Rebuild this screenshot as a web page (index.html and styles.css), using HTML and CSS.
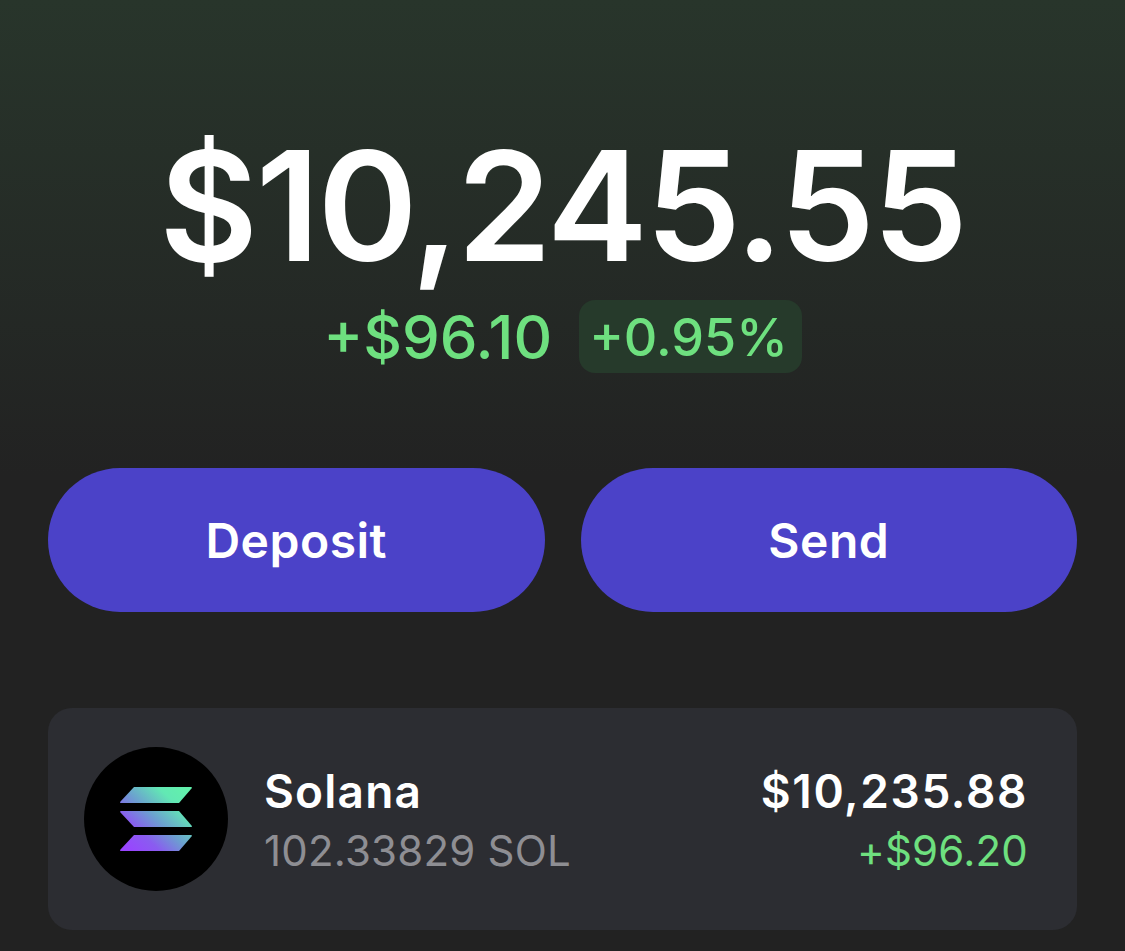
FILE: index.html
```html
<!DOCTYPE html>
<html lang="en">
<head>
    <meta charset="UTF-8">
    <title>Wallet</title>
    <link rel="stylesheet" href="styles.css">
</head>
<body>
    <div class="balance">$10,245.55</div>
    <div class="change">
        <span class="change-amount">+$96.10</span>
        <span class="change-pill">+0.95%</span>
    </div>
    <div class="actions">
        <button class="action-btn">Deposit</button>
        <button class="action-btn">Send</button>
    </div>
    <div class="token">
        <div class="token-logo">
            <svg width="72" height="65" viewBox="0 0 72 65">
                <defs>
                    <linearGradient id="sol" gradientUnits="userSpaceOnUse" x1="8" y1="62" x2="64" y2="2">
                        <stop offset="0" stop-color="#9945ff"/>
                        <stop offset="0.25" stop-color="#8a5cf0"/>
                        <stop offset="0.5" stop-color="#6c9fd0"/>
                        <stop offset="0.8" stop-color="#62e8b4"/>
                        <stop offset="1" stop-color="#62f0ac"/>
                    </linearGradient>
                </defs>
                <path d="M14 0H71Q72.5 0 71.5 1.5L59 16H1Q-.5 16 .5 14.5Z" fill="url(#sol)"/>
                <path d="M1 24H59L71.5 38.5Q72.5 40 71 40H14L.5 25.5Q-.5 24 1 24Z" fill="url(#sol)"/>
                <path d="M14 48H71Q72.5 48 71.5 49.5L59 64H1Q-.5 64 .5 62.5Z" fill="url(#sol)"/>
            </svg>
        </div>
        <div class="token-info">
            <div class="token-name">Solana</div>
            <div class="token-qty">102.33829 SOL</div>
        </div>
        <div class="token-values">
            <div class="token-value">$10,235.88</div>
            <div class="token-gain">+$96.20</div>
        </div>
    </div>
</body>
</html>
```
FILE: styles.css
```css
html, body {
    height: 100%;
}
body {
    margin: 0;
    padding: 130px 48px 0;
    box-sizing: border-box;
    overflow: hidden;
    font-family: Inter, "Liberation Sans", sans-serif;
    color: #fff;
    background: linear-gradient(180deg, #28352b 0%, #222 50%, #222 100%);
}
.balance {
    text-align: center;
    font-size: 152px;
    font-weight: 600;
    line-height: 152px;
    letter-spacing: -2.5px;
}
.change {
    display: flex;
    justify-content: center;
    align-items: center;
    gap: 27px;
    margin-top: 18px;
    color: #6ee07f;
    font-size: 60px;
    font-weight: 500;
}
.change-pill {
    background: #263a2b;
    border-radius: 16px;
    padding: 7px 14px 5px 10px;
    font-size: 52px;
    line-height: 61px;
}
.actions {
    display: flex;
    gap: 36px;
    margin-top: 95px;
}
.action-btn {
    flex: 1;
    height: 144px;
    border: none;
    border-radius: 72px;
    background: #4b42c8;
    color: #fff;
    font-family: inherit;
    font-size: 48px;
    font-weight: 600;
    letter-spacing: 0.5px;
}
.token {
    display: flex;
    align-items: center;
    height: 222px;
    margin-top: 96px;
    padding: 0 49px 0 36px;
    border-radius: 24px;
    background: #2c2d32;
}
.token-logo {
    width: 144px;
    height: 144px;
    border-radius: 50%;
    background: #000;
    display: flex;
    align-items: center;
    justify-content: center;
}
.token-info {
    flex: 1;
    margin-left: 36px;
    padding-top: 4px;
}
.token-values {
    text-align: right;
    padding-top: 4px;
}
.token-name, .token-value {
    font-size: 46px;
    font-weight: 600;
    line-height: 60px;
    letter-spacing: 1.2px;
}
.token-value {
    letter-spacing: 1.6px;
}
.token-qty, .token-gain {
    font-size: 42px;
    line-height: 60px;
    letter-spacing: 0.2px;
}
.token-qty {
    color: #8e8e93;
}
.token-gain {
    color: #6ee07f;
}
```
